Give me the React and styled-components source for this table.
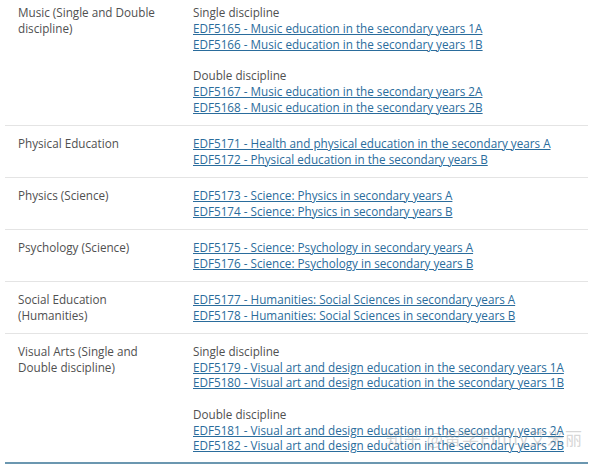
import React from "react";
import styled, { createGlobalStyle } from "styled-components";

const Global = createGlobalStyle`
  html, body { margin: 0; padding: 0; background: #fff; }
  body { font-family: "Open Sans", "Noto Sans", sans-serif; overflow: hidden; }
`;

const Page = styled.div`
  position: relative;
  width: 600px;
  height: 468px;
  overflow: hidden;
`;

const Table = styled.div`
  margin: -5px 12px 0 5px;
  border-bottom: 2px solid #6b97b0;
`;

const Row = styled.div`
  display: grid;
  grid-template-columns: 175px 1fr;
  padding: 10px 0 9.5px 13px;
  border-top: ${(p) => (p.$first ? "none" : "1px solid #e4e4e4")};
  font-size: 11.7px;
  line-height: 15.75px;
  color: #505050;
  &:last-child { padding-bottom: 7.5px; }
`;

const Subject = styled.div`
  padding-right: 16px;
`;

const Units = styled.div`
  display: flex;
  flex-direction: column;
`;

const Group = styled.div`
  display: flex;
  flex-direction: column;
  & + & { margin-top: 15.75px; }
`;

const Heading = styled.div`
  color: #505050;
`;

const UnitLink = styled.a`
  color: #2a6c9c;
  text-decoration: underline;
  text-underline-offset: 1px;
  white-space: nowrap;
`;

const Watermark = styled.div`
  position: absolute;
  left: 386px;
  top: 425px;
  font-size: 17px;
  color: rgba(150, 150, 150, 0.4);
  font-family: "Noto Sans CJK SC", "Open Sans", sans-serif;
  letter-spacing: 1px;
  pointer-events: none;
`;

const data = [
  {
    subject: "Music (Single and Double discipline)",
    groups: [
      {
        heading: "Single discipline",
        links: [
          "EDF5165 - Music education in the secondary years 1A",
          "EDF5166 - Music education in the secondary years 1B",
        ],
      },
      {
        heading: "Double discipline",
        links: [
          "EDF5167 - Music education in the secondary years 2A",
          "EDF5168 - Music education in the secondary years 2B",
        ],
      },
    ],
  },
  {
    subject: "Physical Education",
    groups: [
      {
        links: [
          "EDF5171 - Health and physical education in the secondary years A",
          "EDF5172 - Physical education in the secondary years B",
        ],
      },
    ],
  },
  {
    subject: "Physics (Science)",
    groups: [
      {
        links: [
          "EDF5173 - Science: Physics in secondary years A",
          "EDF5174 - Science: Physics in secondary years B",
        ],
      },
    ],
  },
  {
    subject: "Psychology (Science)",
    groups: [
      {
        links: [
          "EDF5175 - Science: Psychology in secondary years A",
          "EDF5176 - Science: Psychology in secondary years B",
        ],
      },
    ],
  },
  {
    subject: "Social Education (Humanities)",
    groups: [
      {
        links: [
          "EDF5177 - Humanities: Social Sciences in secondary years A",
          "EDF5178 - Humanities: Social Sciences in secondary years B",
        ],
      },
    ],
  },
  {
    subject: "Visual Arts (Single and Double discipline)",
    groups: [
      {
        heading: "Single discipline",
        links: [
          "EDF5179 - Visual art and design education in the secondary years 1A",
          "EDF5180 - Visual art and design education in the secondary years 1B",
        ],
      },
      {
        heading: "Double discipline",
        links: [
          "EDF5181 - Visual art and design education in the secondary years 2A",
          "EDF5182 - Visual art and design education in the secondary years 2B",
        ],
      },
    ],
  },
];

export default function App() {
  return (
    <Page>
      <Global />
      <Table>
        {data.map((row, i) => (
          <Row key={row.subject} $first={i === 0}>
            <Subject>{row.subject}</Subject>
            <Units>
              {row.groups.map((g, j) => (
                <Group key={j}>
                  {g.heading && <Heading>{g.heading}</Heading>}
                  {g.links.map((l) => (
                    <UnitLink key={l} href="#">
                      {l}
                    </UnitLink>
                  ))}
                </Group>
              ))}
            </Units>
          </Row>
        ))}
      </Table>
      <Watermark>知乎 @留学Emily艾米丽</Watermark>
    </Page>
  );
}
